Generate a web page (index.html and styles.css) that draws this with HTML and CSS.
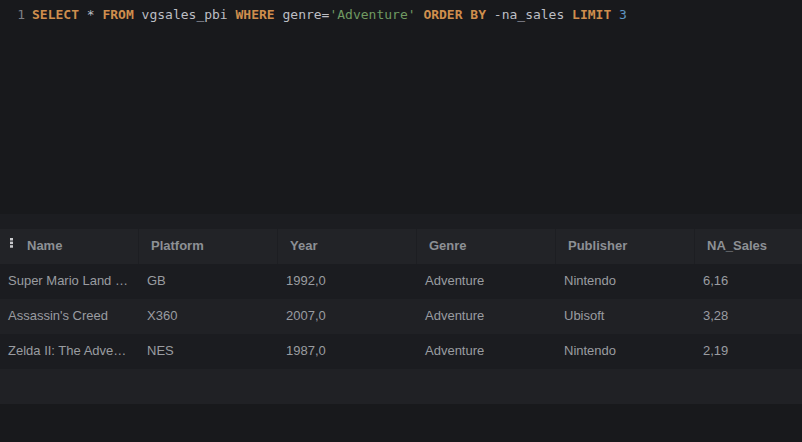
FILE: index.html
```html
<!DOCTYPE html>
<html>
<head>
<meta charset="utf-8">
<link rel="stylesheet" href="styles.css">
</head>
<body>
<div class="app">
  <div class="editor">
    <div class="line">
      <span class="ln">1</span>
      <span class="code"><span class="kw">SELECT</span> * <span class="kw">FROM</span> vgsales_pbi <span class="kw">WHERE</span> genre=<span class="str">'Adventure'</span> <span class="kw">ORDER BY</span> -na_sales <span class="kw">LIMIT</span> <span class="num">3</span></span>
    </div>
  </div>
  <div class="band"></div>
  <div class="grid">
    <div class="row head">
      <div class="cell first"><svg class="kebab" width="3" height="10" viewBox="0 0 3 10"><rect x="0" y="0" width="3" height="2.5" fill="#c9cacd"/><rect x="0" y="3.6" width="3" height="2.5" fill="#c9cacd"/><rect x="0" y="7.2" width="3" height="2.5" fill="#c9cacd"/></svg>Name</div>
      <div class="cell">Platform</div>
      <div class="cell">Year</div>
      <div class="cell">Genre</div>
      <div class="cell">Publisher</div>
      <div class="cell last">NA_Sales</div>
    </div>
    <div class="row odd">
      <div class="cell">Super Mario Land 2: 6 Golden Coins</div>
      <div class="cell">GB</div>
      <div class="cell">1992,0</div>
      <div class="cell">Adventure</div>
      <div class="cell">Nintendo</div>
      <div class="cell last">6,16</div>
    </div>
    <div class="row even">
      <div class="cell">Assassin's Creed</div>
      <div class="cell">X360</div>
      <div class="cell">2007,0</div>
      <div class="cell">Adventure</div>
      <div class="cell">Ubisoft</div>
      <div class="cell last">3,28</div>
    </div>
    <div class="row odd">
      <div class="cell">Zelda II: The Adventure of Link</div>
      <div class="cell">NES</div>
      <div class="cell">1987,0</div>
      <div class="cell">Adventure</div>
      <div class="cell">Nintendo</div>
      <div class="cell last">2,19</div>
    </div>
    <div class="row even empty"></div>
  </div>
</div>
</body>
</html>
```

FILE: styles.css
```css
html, body {
  margin: 0;
  padding: 0;
  background: #18191c;
}
.app {
  width: 802px;
  height: 442px;
  display: flex;
  flex-direction: column;
  background: #18191c;
  overflow: hidden;
}
.editor {
  height: 214px;
  background: #18191c;
  font-family: "DejaVu Sans Mono", monospace;
  font-size: 13px;
  color: #bcbec4;
}
.line {
  display: flex;
  height: 18px;
  line-height: 18px;
  margin-top: 6px;
}
.ln {
  width: 25px;
  text-align: right;
  color: #7c7e84;
  padding-right: 7px;
}
.code {
  white-space: pre;
}
.kw { color: #cf8e4d; font-weight: bold; }
.str { color: #6f9a62; }
.num { color: #5d95c4; }
.band {
  height: 15px;
  background: #1c1d21;
}
.grid {
  display: flex;
  flex-direction: column;
  font-family: "Liberation Sans", Arial, sans-serif;
  font-size: 13px;
}
.row {
  display: grid;
  grid-template-columns: 139px 139px 139px 139px 139px 107px;
  height: 35px;
}
.row.head {
  background: #222327;
  color: #8d9095;
  font-weight: bold;
}
.row.odd { background: #1b1c20; }
.row.even { background: #202125; }
.cell {
  padding: 0 8px;
  white-space: nowrap;
  overflow: hidden;
  text-overflow: ellipsis;
  color: #9a9ca1;
  min-width: 0;
  line-height: 33px;
}
.head .cell {
  display: flex;
  align-items: center;
  padding: 0 12px 2px 12px;
  color: #8d9095;
  border-right: 1px solid #1d1e22;
}
.head .cell.first {
  padding-left: 10px;
}
.head .cell.last { border-right: none; }
.kebab {
  flex: none;
  margin-right: 14px;
  margin-top: -6px;
}
```
